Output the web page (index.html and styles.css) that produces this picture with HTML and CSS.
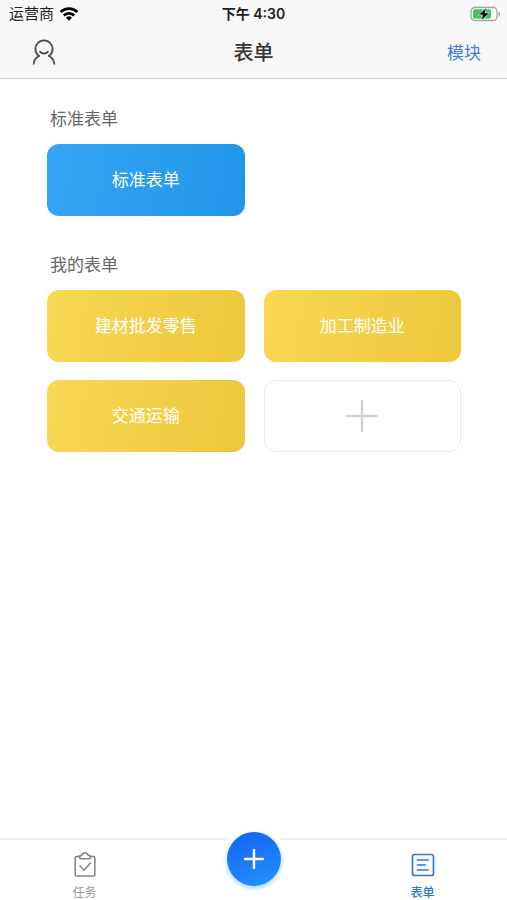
FILE: index.html
```html
<!DOCTYPE html>
<html lang="zh-CN">
<head>
    <meta charset="UTF-8">
    <meta name="viewport" content="width=device-width, initial-scale=1.0">
    <title>表单</title>
    <link rel="stylesheet" href="styles.css">
</head>
<body>

    <header class="header">
        <!-- Status bar -->
        <div class="status-bar">
            <div class="carrier">
                <span>运营商</span>
                <svg class="wifi" width="20" height="14" viewBox="0 0 20 14" fill="none" stroke="#000" stroke-width="2.8">
                    <path d="M1.6 5a12 12 0 0 1 16.8 0"/>
                    <path d="M4.8 8.6a7.4 7.4 0 0 1 10.4 0"/>
                    <path d="M10 13.7L7 10.8a4.3 4.3 0 0 1 6 0z" fill="#000" stroke="none"/>
                </svg>
            </div>
            <div class="time">下午 4:30</div>
            <svg class="battery" width="31" height="16" viewBox="0 0 31 16">
                <rect x="1" y="1.5" width="26" height="13" rx="4" fill="#fff" stroke="#a3a09f" stroke-width="1.3"/>
                <rect x="3" y="3.3" width="18" height="9.4" rx="2" fill="#43c463"/>
                <path d="M28.5 5.5c2 .6 2 4.4 0 5z" fill="#a3a09f"/>
                <path d="M16.5 1.7L8.3 8.9h4.3l-1.3 5.6 8.3-7.6h-4.5z" fill="#000" stroke="#fff" stroke-width=".6"/>
            </svg>
        </div>

        <!-- Navigation bar -->
        <div class="nav-bar">
            <button class="nav-user" type="button" aria-label="个人中心">
                <svg width="24" height="28" viewBox="0 0 24 28" fill="none" stroke="#4a4a4a" stroke-width="1.8" stroke-linecap="round">
                    <path d="M7 17a8.6 8.6 0 1 1 10 0"/>
                    <path d="M7 17C4 18.6 2 21.2 1.7 24.8"/>
                    <path d="M17 17c3 1.6 5 4.2 5.3 7.8"/>
                    <path d="M8 12.6c2 2.5 6 2.5 8 0"/>
                </svg>
            </button>
            <h1 class="nav-title">表单</h1>
            <a class="nav-link" href="#">模块</a>
        </div>
    </header>

    <main class="content">
        <section class="form-section">
            <h2 class="section-title">标准表单</h2>
            <div class="card-grid">
                <button class="card standard" type="button">标准表单</button>
            </div>
        </section>

        <section class="form-section">
            <h2 class="section-title">我的表单</h2>
            <div class="card-grid">
                <button class="card custom" type="button">建材批发零售</button>
                <button class="card custom" type="button">加工制造业</button>
                <button class="card custom" type="button">交通运输</button>
                <button class="card add" type="button" aria-label="添加表单">
                    <svg width="34" height="34" viewBox="0 0 34 34" stroke="#d2d2d2" stroke-width="2.4">
                        <path d="M17 1v32M1 17h32"/>
                    </svg>
                </button>
            </div>
        </section>
    </main>

    <!-- Bottom tabs -->
    <nav class="tab-bar">
        <a class="tab" href="#">
            <svg width="24" height="28" viewBox="0 0 24 28" fill="none" stroke="#858585" stroke-width="1.6" stroke-linejoin="round" stroke-linecap="round">
                <path d="M7 5.5H3.7Q2.2 5.5 2.2 7v16.500Q2.2 25 3.7 25h16.6q1.5 0 1.5-1.5V7q0-1.5-1.5-1.5H17"/>
                <path d="M6.5 5.5q0-1.3 1.5-1.3h1c.7-3.2 5.3-3.2 6 0h1q1.5 0 1.5 1.3Q17.500 7.8 15.5 7.8h-7Q6.5 7.8 6.5 5.5z"/>
                <path d="M7 15l4 4.2 6.5-7.2"/>
            </svg>
            <span>任务</span>
        </a>
        <div class="tab-center">
            <button class="tab-add" type="button" aria-label="新建">
                <svg width="20" height="20" viewBox="0 0 20 20" stroke="#fff" stroke-width="2.4" stroke-linecap="round">
                    <path d="M10 1v18M1 10h18"/>
                </svg>
            </button>
        </div>
        <a class="tab active" href="#">
            <svg width="24" height="28" viewBox="0 0 24 28" fill="none" stroke="#2b7bd0" stroke-width="1.7" stroke-linecap="round">
                <rect x="1.5" y="3.5" width="21" height="21" rx="2"/>
                <path d="M6.5 9H17M6.5 14h7.8M6.5 19H17"/>
            </svg>
            <span>表单</span>
        </a>
    </nav>

</body>
</html>
```
FILE: styles.css
```css
* {
    box-sizing: border-box;
}

body {
    margin: 0;
    min-height: 100vh;
    display: flex;
    flex-direction: column;
    background-color: #fff;
    color: #333;
    font-family: "Inter", "Noto Sans CJK SC", sans-serif;
}

button {
    border: none;
    padding: 0;
    background: none;
    font-family: inherit;
    cursor: pointer;
}

a {
    text-decoration: none;
}

svg {
    display: block;
}

/* Header */
.header {
    background-color: #f8f8f8;
    border-bottom: 1px solid #d4d4d4;
}

.status-bar {
    display: grid;
    grid-template-columns: 1fr auto 1fr;
    align-items: center;
    height: 27px;
    padding: 0 6px;
    color: #222;
    font-size: 15px;
    line-height: 20px;
}

.carrier {
    display: flex;
    align-items: center;
    gap: 5px;
    padding-left: 3px;
}

.time {
    font-size: 14px;
    font-weight: 600;
}

.battery {
    justify-self: end;
}

.nav-bar {
    display: grid;
    grid-template-columns: 1fr auto 1fr;
    align-items: center;
    height: 51px;
    padding: 0 26px;
}

.nav-user {
    justify-self: start;
    padding-left: 6px;
}

.nav-title {
    margin: 0;
    font-size: 20px;
    font-weight: 500;
    line-height: 28px;
}

.nav-link {
    justify-self: end;
    color: #3f7be0;
    font-size: 17px;
    line-height: 24px;
}

/* Form cards */
.content {
    flex: 1;
    padding: 28px 46px 0 47px;
}

.form-section {
    margin-bottom: 37px;
}

.section-title {
    margin: 0 0 13px 3px;
    color: #666;
    font-size: 17px;
    font-weight: 400;
    line-height: 24px;
}

.card-grid {
    display: grid;
    grid-template-columns: 1fr 1fr;
    gap: 18px 19px;
}

.card {
    display: flex;
    align-items: center;
    justify-content: center;
    height: 72px;
    border-radius: 12px;
    color: #fff;
    font-size: 17px;
    line-height: 24px;
}

.standard {
    background: linear-gradient(100deg, #36a4f5, #2196e8);
}

.custom {
    background: linear-gradient(100deg, #fbd853, #eac73c);
}

.add {
    border: 1px solid #ececec;
}

/* Bottom tabs */
.tab-bar {
    display: grid;
    grid-template-columns: repeat(3, 1fr);
    height: 62px;
    border-top: 2px solid #ededed;
}

.tab {
    display: flex;
    flex-direction: column;
    align-items: center;
    padding-top: 11px;
    color: #999;
    font-size: 12px;
    line-height: 28px;
}

.tab.active {
    color: #2b7bd0;
    font-weight: 500;
}

.tab-center {
    display: flex;
    justify-content: center;
    align-items: flex-start;
}

/* White ring hides the bar's border around the button */
.tab-add {
    display: flex;
    align-items: center;
    justify-content: center;
    width: 54px;
    height: 54px;
    margin-top: -8px;
    border-radius: 50%;
    background: linear-gradient(160deg, #1660f0, #2196ff);
    box-shadow: 0 2px 5px #9fd0ff, 0 0 0 6px #fff;
}
```
